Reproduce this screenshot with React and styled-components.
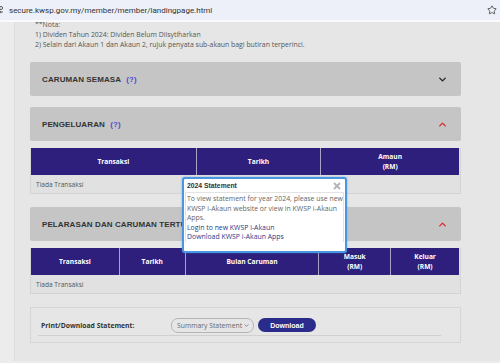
import styled, { createGlobalStyle } from "styled-components"
import { ChevronDown, ChevronUp, Star } from "lucide-react"

const GlobalStyle = createGlobalStyle`
    html, body { margin: 0; padding: 0; }
    body { font-family: "Open Sans", "Liberation Sans", sans-serif; background: #e6e6e6; }
    * { box-sizing: border-box; }
`

export default function App(){

    return(
        <>
            <GlobalStyle />
            <Frame>
                <AddressBar>
                    <SiteIcon width="8" height="10" viewBox="0 0 8 10">
                        <path d="M1 3 H7 M1 7 H7" stroke="#555" strokeWidth="1.2" />
                        <circle cx="5" cy="3" r="1.5" fill="#fff" stroke="#555" strokeWidth="1" />
                        <circle cx="3" cy="7" r="1.5" fill="#fff" stroke="#555" strokeWidth="1" />
                    </SiteIcon>
                    <Url>secure.kwsp.gov.my/member/member/landingpage.html</Url>
                    <Star size={10} strokeWidth={1.8} color="#333" />
                </AddressBar>
                <Strip />
                <Page>
                    <Main>
                        <Note>
                            <div>**Nota:</div>
                            <div>1) Dividen Tahun 2024: Dividen Belum Diisytiharkan</div>
                            <div>2) Selain dari Akaun 1 dan Akaun 2, rujuk penyata sub-akaun bagi butiran terperinci.</div>
                        </Note>

                        <AccordionHead $top={12}>
                            <Title>CARUMAN SEMASA <Help>(?)</Help></Title>
                            <ChevronDown size={11} strokeWidth={3} color="#222" />
                        </AccordionHead>

                        <AccordionHead $top={11}>
                            <Title>PENGELUARAN <Help>(?)</Help></Title>
                            <ChevronUp size={11} strokeWidth={3} color="#e0262b" />
                        </AccordionHead>

                        <Table>
                            <HeadRow $cols="166fr 125fr 138fr">
                                <Th>Transaksi</Th>
                                <Th>Tarikh</Th>
                                <Th>Amaun<br />(RM)</Th>
                            </HeadRow>
                            <Row>Tiada Transaksi</Row>
                        </Table>

                        <AccordionHead $top={13}>
                            <Title>PELARASAN DAN CARUMAN TERTUNGGAK</Title>
                            <ChevronUp size={11} strokeWidth={3} color="#e0262b" />
                        </AccordionHead>

                        <Table>
                            <HeadRow $cols="89fr 66fr 134fr 72fr 68fr">
                                <Th>Transaksi</Th>
                                <Th>Tarikh</Th>
                                <Th>Bulan Caruman</Th>
                                <Th>Masuk<br />(RM)</Th>
                                <Th>Keluar<br />(RM)</Th>
                            </HeadRow>
                            <Row>Tiada Transaksi</Row>
                        </Table>

                        <PrintPanel>
                            <PrintRow>
                                <PrintLabel>Print/Download Statement:</PrintLabel>
                                <Select>
                                    Summary Statement
                                    <ChevronDown size={7} strokeWidth={2} color="#555" />
                                </Select>
                                <DownloadButton>Download</DownloadButton>
                            </PrintRow>
                        </PrintPanel>
                    </Main>

                    <Popup>
                        <PopupTitle>
                            2024 Statement
                            <svg width="8" height="8" viewBox="0 0 8 8">
                                <path d="M1 1 L7 7 M7 1 L1 7" stroke="#b3b3b3" strokeWidth="1.8" />
                            </svg>
                        </PopupTitle>
                        <PopupBody>
                            <div>To view statement for year 2024, please use new</div>
                            <div>KWSP i-Akaun website or view in KWSP i-Akaun</div>
                            <div>Apps.</div>
                            <PopupLink>Login to new KWSP i-Akaun</PopupLink>
                            <PopupLink>Download KWSP i-Akaun Apps</PopupLink>
                        </PopupBody>
                    </Popup>
                </Page>
            </Frame>
        </>
    )
}

const Frame = styled.div`
    width: 500px; height: 363px; overflow: hidden;
    display: flex; flex-direction: column;
`
const AddressBar = styled.div`
    height: 20px; flex: none;
    display: flex; align-items: center; gap: 5px;
    padding-right: 3px;
    background: #edf0f8;
`
const SiteIcon = styled.svg`
    margin-left: -4px; flex: none;
`
const Url = styled.div`
    flex: 1;
    font-family: Roboto, "Open Sans", sans-serif; font-size: 8px; color: #333;
`
const Strip = styled.div`
    height: 2px; flex: none; background: #fafafa;
`
const Page = styled.div`
    position: relative; flex: 1;
    background: #ececec; overflow: hidden;
`
const Main = styled.div`
    margin-left: 14px; height: 100%;
    border-left: 1px solid #dcdcdc;
    background: #e6e6e6;
    padding-left: 15px;
`
const Note = styled.div`
    margin-top: -2px; padding-left: 5px;
    font-size: 6.9px; line-height: 10px; color: #555;
`
const AccordionHead = styled.div`
    width: 431px; height: 34px; margin-top: ${p => p.$top}px;
    display: flex; align-items: center; justify-content: space-between;
    padding: 0 13px 0 12px;
    background: #c5c5c5; border-radius: 2px;
`
const Title = styled.div`
    font-family: "Liberation Sans", Arial, sans-serif; font-weight: bold;
    font-size: 8px; color: #333; letter-spacing: 0.1px;
`
const Help = styled.span`
    color: #5147d6; margin-left: 3px;
`
const Table = styled.div`
    width: 431px; margin-top: 7px;
    border: 1px solid #d4d4d4; border-top: none;
    background: #e1e1e1;
`
const HeadRow = styled.div`
    display: grid; grid-template-columns: ${p => p.$cols};
    height: 27px; margin-right: 1px;
    background: #2d1f7b;
`
const Th = styled.div`
    display: flex; align-items: center; justify-content: center; text-align: center;
    font-size: 6.6px; font-weight: bold; line-height: 9.5px; color: #fff;
    border-right: 1px solid #a8a4c8;
    &:last-child{ border-right: none; }
`
const Row = styled.div`
    height: 18px; display: flex; align-items: center;
    padding-left: 5px;
    font-size: 6.6px; color: #555;
`
const PrintPanel = styled.div`
    width: 431px; margin-top: 13px; height: 36px;
    border: 1px solid #d6d6d6;
    padding: 7px 0 0 7px;
`
const PrintRow = styled.div`
    width: 403px; height: 21px;
    display: flex; align-items: center;
    padding-left: 3px;
    border-bottom: 1px solid #d0d0d0;
`
const PrintLabel = styled.div`
    width: 130px;
    font-size: 6.8px; font-weight: bold; color: #333;
`
const Select = styled.div`
    width: 83px; height: 15px;
    display: flex; align-items: center; justify-content: space-between;
    padding: 0 3px 0 5px;
    border: 1px solid #b5b5b5; border-radius: 7px;
    font-size: 6.8px; color: #666;
`
const DownloadButton = styled.div`
    width: 58px; height: 14px; margin-left: 4px;
    display: flex; align-items: center; justify-content: center;
    background: #2b2b8c; border-radius: 7px;
    font-family: "Liberation Sans", Arial, sans-serif; font-weight: bold;
    font-size: 7px; color: #fff;
`
const Popup = styled.div`
    position: absolute; left: 182px; top: 155px;
    width: 165px; height: 76px;
    background: #fff; border: 2px solid #4a96e2; border-radius: 3px;
    box-shadow: 0 0 2px rgba(60, 140, 220, 0.6);
    padding: 0 1px;
`
const PopupTitle = styled.div`
    height: 13px; display: flex; align-items: center; justify-content: space-between;
    padding: 0 3px 0 2px;
    font-family: "Liberation Sans", Arial, sans-serif; font-weight: bold;
    font-size: 6.8px; color: #333;
`
const PopupBody = styled.div`
    border: 1px solid #e3e3e3; border-bottom: none;
    padding: 1px 0 0 1px;
    font-size: 6.9px; line-height: 9.6px; color: #666;
    white-space: nowrap; overflow: hidden;
`
const PopupLink = styled.div`
    color: #2b3a8e;
`
